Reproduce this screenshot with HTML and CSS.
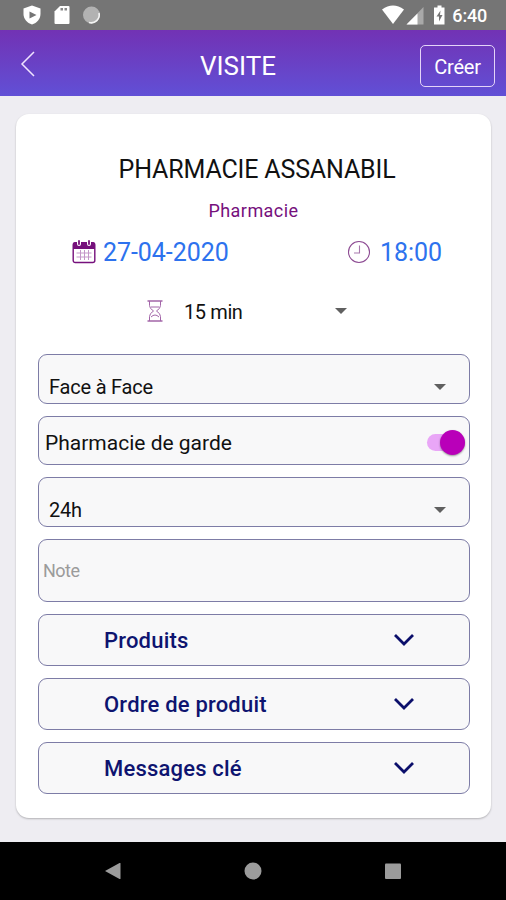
FILE: index.html
```html
<!DOCTYPE html>
<html lang="fr">
<head>
<meta charset="UTF-8">
<title>Visite</title>
<link rel="stylesheet" href="styles.css">
</head>
<body>
<div class="status">
    <svg class="status-left" width="80" height="20" viewBox="0 0 80 20">
        <path d="M9 0.5L17.500 3.500V9C17.500 14 14 18 9 19.500C4 18 .5 14 .5 9V3.500Z" fill="#fff"/>
        <path d="M6.500 6.500v7l7-3.500z" fill="#757575"/>
        <path d="M37 1h8.500q1 0 1 1v16q0 1-1 1H32.500q-1 0-1-1V6.500z" fill="#fff"/>
        <path d="M37.500 3h2.500v2.500h-2.500zM41.500 3h2.500v2.500h-2.500z" fill="#8a8a8a"/>
        <circle cx="68.500" cy="10" r="8.500" fill="#b2b2b2"/>
        <path d="M76 8a8 8 0 0 1-10 9.500" fill="none" stroke="#f4f4f4" stroke-width="1.600"/>
    </svg>
    <svg class="status-right" width="66" height="20" viewBox="0 0 66 20">
        <path d="M0 4.500Q11-3.500 22 4.500L11 19z" fill="#fff"/>
        <path d="M41.500 2v17.500h-17z" fill="#a9a9a9"/>
        <path d="M35.500 8.500v11h-11z" fill="#fff"/>
        <path d="M55.500 0.500h4v2h3v17H52v-17h3.500z" fill="#fff"/>
        <path d="M58.500 5.500L54.500 11.500h2.500v5l3.500-6.500H58z" fill="#757575"/>
    </svg>
    <span class="clock">6:40</span>
</div>
<div class="header">
    <svg class="back" width="16" height="28" viewBox="0 0 16 28"><path d="M14 2L2 14L14 26" fill="none" stroke="#f0e4ff" stroke-width="1.500"/></svg>
    <h1>VISITE</h1>
    <a class="create">Créer</a>
</div>
<div class="main">
    <div class="card">
        <h2>PHARMACIE ASSANABIL</h2>
        <p class="type">Pharmacie</p>
        <div class="when">
            <svg class="cal" width="24" height="24" viewBox="0 0 24 24">
                <rect x="1.200" y="3" width="21.600" height="19.500" rx="2" fill="#fff" stroke="#76107c" stroke-width="1.400"/>
                <path d="M1 9V4q0-2 2-2h18q2 0 2 2v5z" fill="#76107c"/>
                <path d="M4.500 13h15M4.500 17h15M8.500 10v10M12.500 10v10M16.500 10v10" stroke="#c496c8" stroke-width="1"/>
                <path d="M7 1v3M17 1v3" stroke="#fff" stroke-width="4" stroke-linecap="round"/>
                <path d="M7 1v3M17 1v3" stroke="#76107c" stroke-width="1.800" stroke-linecap="round"/>
            </svg>
            <span class="date">27-04-2020</span>
            <svg class="watch" width="24" height="24" viewBox="0 0 24 24" fill="none" stroke="#8d4b93">
                <circle cx="12" cy="12" r="10.500" stroke-width="1.100"/>
                <path d="M12.500 5.500V13H7" stroke="#a878ad" stroke-width="1.100"/>
            </svg>
            <span class="hour">18:00</span>
        </div>
        <div class="duration">
            <svg width="16" height="22" viewBox="0 0 16 22" fill="none" stroke="#a265a8">
                <path d="M0.500 1h15M0.500 21h15" stroke-width="1.300"/>
                <path d="M2.500 1v4.500q0 3 4 5.500q-4 2.500-4 5.500V21M13.500 1v4.500q0 3-4 5.500q4 2.500 4 5.500V21M4 7h8M4 17q4-4 8 0" stroke-width="1"/>
            </svg>
            <span>15 min</span>
            <i class="arrow"></i>
        </div>
        <div class="field select"><span>Face à Face</span><i class="arrow"></i></div>
        <div class="field toggle"><span>Pharmacie de garde</span><b class="switch"></b></div>
        <div class="field select"><span>24h</span><i class="arrow"></i></div>
        <div class="field note">Note</div>
        <div class="field fold">
            <span>Produits</span>
            <svg width="22" height="14" viewBox="0 0 22 14"><path d="M2 2l9 9l9-9" fill="none" stroke="#0b0f6b" stroke-width="2.800"/></svg>
        </div>
        <div class="field fold">
            <span>Ordre de produit</span>
            <svg width="22" height="14" viewBox="0 0 22 14"><path d="M2 2l9 9l9-9" fill="none" stroke="#0b0f6b" stroke-width="2.800"/></svg>
        </div>
        <div class="field fold">
            <span>Messages clé</span>
            <svg width="22" height="14" viewBox="0 0 22 14"><path d="M2 2l9 9l9-9" fill="none" stroke="#0b0f6b" stroke-width="2.800"/></svg>
        </div>
    </div>
</div>
<div class="nav">
    <svg width="18" height="18" viewBox="0 0 18 18"><path d="M1 9L15.500 1q1-.3 1 .5v15q0 .8-1 .5z" fill="#9b9b9b"/></svg>
    <svg width="18" height="18" viewBox="0 0 18 18"><circle cx="9" cy="9" r="8.500" fill="#9b9b9b"/></svg>
    <svg width="18" height="18" viewBox="0 0 18 18"><rect x="1" y="1.500" width="16" height="15.500" rx="1" fill="#9b9b9b"/></svg>
</div>
</body>
</html>
```
FILE: styles.css
```css
*{margin: 0;padding: 0;box-sizing: border-box;}
body{width: 506px;height: 900px;overflow: hidden;background: #eeedf2;font-family: Roboto, sans-serif;color: #111;display: flex;flex-direction: column;}
svg{display: block;flex: none;}
.status{height: 30px;background: #757575;display: flex;align-items: center;padding: 0 19px 0 23px;}
.status-right{margin-left: auto;}
.clock{width: 35px;margin-left: 4px;color: #fff;font-size: 18px;font-weight: 500;letter-spacing: -.2px;line-height: 30px;padding-top: 2px;white-space: nowrap;text-align: right;}
.header{height: 66px;background: linear-gradient(#7232b4,#6150d6);display: grid;grid-template-columns: 168px 100px 1fr;align-items: center;padding: 0 11px 0 20px;color: #fff;}
.back{margin-top: 2px;}
h1{font-size: 26px;font-weight: 400;text-align: center;line-height: 30px;padding-top: 6px;}
.create{justify-self: end;width: 75px;height: 42px;margin-top: 6px;border: 1.5px solid #e4d4f8;border-radius: 5px;font-size: 20px;letter-spacing: -.2px;line-height: 42px;text-align: center;}
.main{flex: 1;padding: 18px 15px 0 16px;}
.card{height: 704px;background: #fff;border-radius: 13px;padding: 39px 22px 0;box-shadow: 0 1px 2px rgba(0,0,0,.25);}
h2{font-size: 25px;font-weight: 400;letter-spacing: -.15px;line-height: 34px;padding-left: 7px;text-align: center;white-space: nowrap;}
.type{font-size: 18px;letter-spacing: .45px;line-height: 24px;margin-top: 12px;text-align: center;color: #76107c;}
.when{height: 30px;margin-top: 14px;padding-left: 34px;display: flex;align-items: center;font-size: 25px;color: #2d72ee;white-space: nowrap;}
.date{width: 126px;margin-left: 7px;}
.watch{margin-left: 118px;}
.hour{margin-left: 9px;}
.date,.hour{padding-top: 1px;letter-spacing: -.05px;}
.duration{height: 30px;margin: 29px 0 28px;padding-left: 109px;display: flex;align-items: center;font-size: 20px;}
.duration span{width: 151px;margin-left: 21px;padding-top: 2px;letter-spacing: -.4px;}
.arrow{width: 0;height: 0;border: 6px solid transparent;border-top-color: #606060;border-bottom: 0;}
.field{display: flex;align-items: center;height: 50px;margin-bottom: 12px;border: 1px solid #7d7ca6;border-radius: 9px;background: #f8f8f9;font-size: 20px;width: 432px;}
.select{height: 50px;margin-bottom: 11.500px;padding: 16px 23px 0 10px;justify-content: space-between;letter-spacing: -.2px;}
.toggle{height: 49px;padding: 5px 4px 0 6px;font-size: 21px;justify-content: space-between;}
.switch{position: relative;width: 38px;height: 17px;border-radius: 9px;background: #e9a6f7;}
.switch:after{content: "";position: absolute;right: 0;top: -4px;width: 25px;height: 25px;border-radius: 50%;background: #b900b9;box-shadow: 0 1px 2px rgba(0,0,0,.4);}
.toggle + .select{height: 50px;margin-bottom: 12.500px;}
.note{height: 63px;padding-left: 4px;font-size: 18px;letter-spacing: -.5px;color: #9b9b9b;}
.fold{height: 52px;padding: 0 54px 0 65px;justify-content: space-between;font-size: 22px;font-weight: 500;letter-spacing: .2px;color: #0e1470;}
.nav{height: 58px;background: #000;display: flex;justify-content: center;align-items: center;gap: 122px;}
```
